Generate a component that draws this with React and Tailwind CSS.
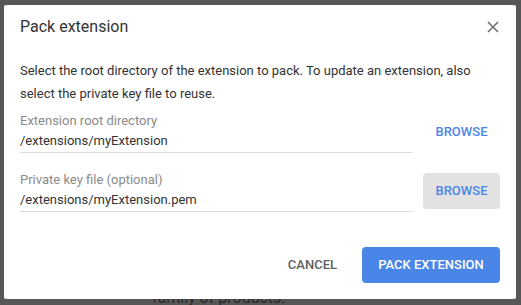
import React from "react";

export default function App() {
  return (
    <div className="relative w-[521px] h-[305px] overflow-hidden bg-[#575757] font-['Roboto',sans-serif]">
      <div className="pt-[288px] pl-[152px] text-[16px] leading-[20px] text-[#2a2a2a]">
        family of products.
      </div>
      <div className="absolute left-[4px] top-[5px] w-[512px] h-[294px] bg-white rounded-[2px] flex flex-col px-4 pt-3 pb-4">
        <div className="flex items-center justify-between h-5">
          <h1 className="text-[16px] leading-5 text-[#333]">Pack extension</h1>
          <svg width="12" height="12" viewBox="0 0 12 12" className="mr-[1px]">
            <path d="M1 1L11 11M11 1L1 11" stroke="#6e6e6e" strokeWidth="1.6" />
          </svg>
        </div>
        <p className="mt-[22px] text-[13px] leading-[23px] text-[#333]">
          Select the root directory of the extension to pack. To update an extension, also select the private key file to reuse.
        </p>
        <div className="mt-[6px] flex items-center gap-[10px]">
          <div className="w-[393px] border-b border-[#dcdcdc] pb-[1px]">
            <div className="text-[13px] leading-5 text-[#8a8a8a]">Extension root directory</div>
            <div className="text-[13px] leading-5 text-[#333]">/extensions/myExtension</div>
          </div>
          <button className="w-[77px] h-[36px] rounded-[4px] text-[13px] font-medium text-[#4a86e8]">BROWSE</button>
        </div>
        <div className="mt-[17px] flex items-center gap-[10px]">
          <div className="w-[393px] border-b border-[#dcdcdc] pb-[1px]">
            <div className="text-[13px] leading-5 text-[#8a8a8a]">Private key file (optional)</div>
            <div className="text-[13px] leading-5 text-[#333]">/extensions/myExtension.pem</div>
          </div>
          <button className="w-[77px] h-[36px] rounded-[4px] bg-[#e2e2e2] text-[13px] font-medium text-[#4a86e8]">BROWSE</button>
        </div>
        <div className="mt-auto flex justify-end items-center gap-[12px]">
          <button className="h-[36px] px-[13px] text-[13px] font-medium text-[#5f5f5f]">CANCEL</button>
          <button className="h-[36px] w-[138px] rounded-[4px] bg-[#4a86e8] text-[13px] font-medium text-white">PACK EXTENSION</button>
        </div>
      </div>
    </div>
  );
}
